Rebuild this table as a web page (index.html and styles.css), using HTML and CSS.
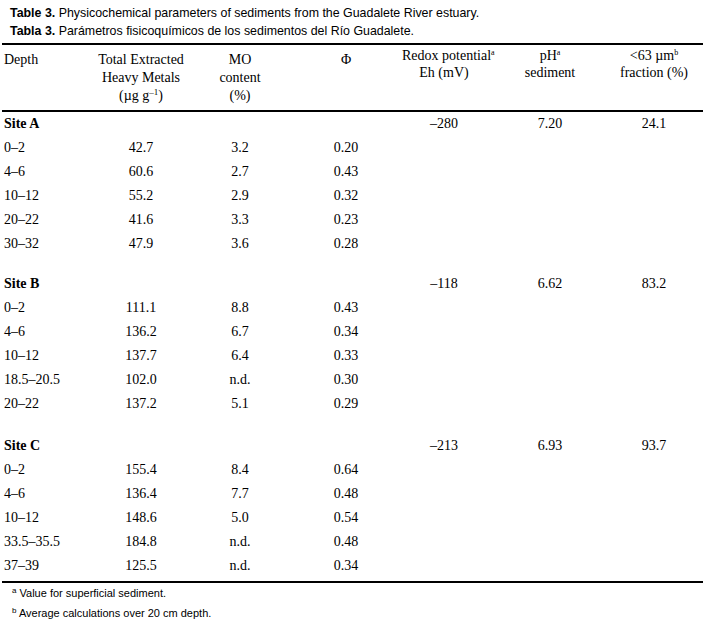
FILE: index.html
```html
<!DOCTYPE html>
<html lang="en">
<head>
<meta charset="utf-8">
<title>Table 3</title>
<link rel="stylesheet" href="styles.css">
</head>
<body>
<div class="page">
  <div class="caption">
    <p><b>Table 3.</b> Physicochemical parameters of sediments from the Guadalete River estuary.</p>
    <p><b>Tabla 3.</b> Parámetros fisicoquímicos de los sedimentos del Río Guadalete.</p>
  </div>
  <table class="data">
    <colgroup>
      <col class="c1"><col class="c2"><col class="c3"><col class="c4"><col class="c5"><col class="c6"><col class="c7"><col class="c8">
    </colgroup>
    <thead>
      <tr>
        <th class="left">Depth</th>
        <th>Total Extracted<br>Heavy Metals<br>(µg g<sup>–1</sup>)</th>
        <th>MO<br>content<br>(%)</th>
        <th>Φ</th>
        <th class="hi">Redox potential<sup class="s">a</sup><br>Eh (mV)</th>
        <th class="hi">pH<sup class="s">a</sup><br>sediment</th>
        <th class="hi">&lt;63 µm<sup class="s">b</sup><br>fraction (%)</th>
        <th></th>
      </tr>
    </thead>
    <tbody>
      <tr class="site"><td class="left"><b>Site A</b></td><td></td><td></td><td></td><td>–280</td><td>7.20</td><td>24.1</td><td></td></tr>
      <tr><td class="left">0–2</td><td>42.7</td><td>3.2</td><td>0.20</td><td></td><td></td><td></td><td></td></tr>
      <tr><td class="left">4–6</td><td>60.6</td><td>2.7</td><td>0.43</td><td></td><td></td><td></td><td></td></tr>
      <tr><td class="left">10–12</td><td>55.2</td><td>2.9</td><td>0.32</td><td></td><td></td><td></td><td></td></tr>
      <tr><td class="left">20–22</td><td>41.6</td><td>3.3</td><td>0.23</td><td></td><td></td><td></td><td></td></tr>
      <tr><td class="left">30–32</td><td>47.9</td><td>3.6</td><td>0.28</td><td></td><td></td><td></td><td></td></tr>
      <tr class="gap"><td colspan="8"></td></tr>
      <tr class="site"><td class="left"><b>Site B</b></td><td></td><td></td><td></td><td>–118</td><td>6.62</td><td>83.2</td><td></td></tr>
      <tr><td class="left">0–2</td><td>111.1</td><td>8.8</td><td>0.43</td><td></td><td></td><td></td><td></td></tr>
      <tr><td class="left">4–6</td><td>136.2</td><td>6.7</td><td>0.34</td><td></td><td></td><td></td><td></td></tr>
      <tr><td class="left">10–12</td><td>137.7</td><td>6.4</td><td>0.33</td><td></td><td></td><td></td><td></td></tr>
      <tr><td class="left">18.5–20.5</td><td>102.0</td><td>n.d.</td><td>0.30</td><td></td><td></td><td></td><td></td></tr>
      <tr><td class="left">20–22</td><td>137.2</td><td>5.1</td><td>0.29</td><td></td><td></td><td></td><td></td></tr>
      <tr class="gap gap2"><td colspan="8"></td></tr>
      <tr class="site"><td class="left"><b>Site C</b></td><td></td><td></td><td></td><td>–213</td><td>6.93</td><td>93.7</td><td></td></tr>
      <tr><td class="left">0–2</td><td>155.4</td><td>8.4</td><td>0.64</td><td></td><td></td><td></td><td></td></tr>
      <tr><td class="left">4–6</td><td>136.4</td><td>7.7</td><td>0.48</td><td></td><td></td><td></td><td></td></tr>
      <tr><td class="left">10–12</td><td>148.6</td><td>5.0</td><td>0.54</td><td></td><td></td><td></td><td></td></tr>
      <tr><td class="left">33.5–35.5</td><td>184.8</td><td>n.d.</td><td>0.48</td><td></td><td></td><td></td><td></td></tr>
      <tr class="last"><td class="left">37–39</td><td>125.5</td><td>n.d.</td><td>0.34</td><td></td><td></td><td></td><td></td></tr>
    </tbody>
  </table>
  <div class="notes">
    <p><sup>a</sup> Value for superficial sediment.</p>
    <p><sup>b</sup> Average calculations over 20 cm depth.</p>
  </div>
</div>
</body>
</html>
```
FILE: styles.css
```css
html, body {
  margin: 0;
  padding: 0;
  background: #fff;
  color: #000;
}
.page {
  padding: 4px 0 0 2px;
  width: 701px;
}
.caption {
  font-family: "Liberation Sans", Arial, sans-serif;
  font-size: 12.4px;
  line-height: 18px;
  padding-left: 8px;
  margin-bottom: 3px;
}
.caption p {
  margin: 0;
}
.data {
  border-collapse: collapse;
  table-layout: fixed;
  width: 701px;
  font-family: "Liberation Serif", "Times New Roman", serif;
  font-size: 14px;
}
.c1 { width: 90px; }
.c2 { width: 98px; }
.c3 { width: 100px; }
.c4 { width: 112px; }
.c5 { width: 84px; }
.c6 { width: 128px; }
.c7 { width: 80px; }
.c8 { width: 9px; }
.data thead tr {
  border-top: 2px solid #000;
  border-bottom: 2px solid #000;
}
.data th {
  font-weight: normal;
  vertical-align: top;
  text-align: center;
  line-height: 18px;
  padding: 6px 0 5px;
  white-space: nowrap;
}
.data th.hi {
  padding-top: 2px;
  line-height: 17px;
}
.data td {
  padding: 0;
  height: 24px;
  line-height: 24px;
  text-align: center;
  white-space: nowrap;
}
.data .left {
  text-align: left;
  padding-left: 2px;
}
.data sup {
  font-size: 9px;
  line-height: 0;
  vertical-align: 5px;
}
.data sup.s {
  font-size: 8px;
}
.data tr.gap td {
  height: 16px;
}
.data tr.gap2 td {
  height: 18px;
}
.data tr.last td {
  padding-bottom: 3px;
}
.data tbody tr.last {
  border-bottom: 2px solid #000;
}
.notes {
  font-family: "Liberation Sans", Arial, sans-serif;
  font-size: 11px;
  line-height: 20px;
  padding: 0 0 0 10px;
}
.notes p {
  margin: 0;
}
.notes sup {
  font-size: 8px;
  line-height: 0;
  vertical-align: 4px;
}
```
